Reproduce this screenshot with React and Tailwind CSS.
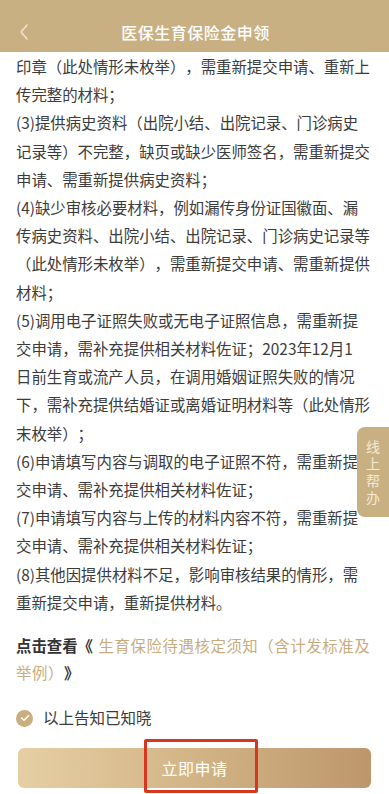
import React from 'react';

const lines = [
  '印章（此处情形未枚举），需重新提交申请、重新上',
  '传完整的材料；',
  '(3)提供病史资料（出院小结、出院记录、门诊病史',
  '记录等）不完整，缺页或缺少医师签名，需重新提交',
  '申请、需重新提供病史资料；',
  '(4)缺少审核必要材料，例如漏传身份证国徽面、漏',
  '传病史资料、出院小结、出院记录、门诊病史记录等',
  '（此处情形未枚举），需重新提交申请、需重新提供',
  '材料；',
  '(5)调用电子证照失败或无电子证照信息，需重新提',
  '交申请，需补充提供相关材料佐证；2023年12月1',
  '日前生育或流产人员，在调用婚姻证照失败的情况',
  '下，需补充提供结婚证或离婚证明材料等（此处情形',
  '末枚举）；',
  '(6)申请填写内容与调取的电子证照不符，需重新提',
  '交申请、需补充提供相关材料佐证；',
  '(7)申请填写内容与上传的材料内容不符，需重新提',
  '交申请、需补充提供相关材料佐证；',
  '(8)其他因提供材料不足，影响审核结果的情形，需',
  '重新提交申请，重新提供材料。',
];

const font = { fontFamily: '"Noto Sans CJK SC", "Noto Sans", sans-serif' };

export default function App() {
  return (
    <div className="relative w-[389px] h-[794px] bg-white overflow-hidden [text-spacing-trim:space-all]" style={font}>
      {/* top bar */}
      <header className="h-[52px] bg-[#c8b083] flex items-center px-4 relative">
        <svg width="12" height="20" viewBox="0 0 12 20" className="ml-[2px] mt-[12px]">
          <path d="M9 3 L3 10 L9 17" fill="none" stroke="#f6e8cc" strokeWidth="1.4" strokeLinecap="round" strokeLinejoin="round" />
        </svg>
        <div className="flex-1 text-center text-white text-[16px] font-medium pt-[12px] pr-[12px] tracking-[0.5px]">
          医保生育保险金申领
        </div>
      </header>

      {/* notice text */}
      <div className="px-4 text-[15.4px] leading-[28.2px] text-[#3b3b3b]">
        {lines.map((l, i) => (
          <div key={i} className="whitespace-nowrap">{l}</div>
        ))}
      </div>

      <div className="px-4 mt-[15.5px] text-[15.4px] leading-[27px]">
        <div className="whitespace-nowrap">
          <span className="font-bold text-[#333]">点击查看《 </span>
          <span className="text-[#c8ac7e] ml-[2px] tracking-[0.6px]">生育保险待遇核定须知（含计发标准及</span>
        </div>
        <div className="whitespace-nowrap">
          <span className="text-[#c8ac7e] tracking-[0.6px]">举例）</span>
          <span className="font-bold text-[#333]">》</span>
        </div>
      </div>

      <div className="px-4 mt-[20.5px] h-[24px] flex items-center gap-[10px]">
        <span className="w-[17px] h-[17px] rounded-full bg-[#c9ae80] flex items-center justify-center">
          <svg width="10" height="8" viewBox="0 0 10 8">
            <path d="M1.5 4 L4 6.3 L8.5 1.8" fill="none" stroke="white" strokeWidth="1.5" strokeLinecap="round" strokeLinejoin="round" />
          </svg>
        </span>
        <span className="text-[15.5px] text-[#3b3b3b]">以上告知已知晓</span>
      </div>

      <div className="relative mx-[18px] mt-[18px]">
        <button className="w-full h-[40px] rounded-[6px] bg-gradient-to-r from-[#e6cfa4] via-[#d2b486] to-[#bd976c] text-white text-[16px] tracking-[0.5px]">
          立即申请
        </button>
        <div className="absolute left-[126px] top-[-9px] w-[114px] h-[54px] border-[3px] border-[#d8361f] rounded-[2px]" />
      </div>

      {/* floating help tab */}
      <div className="absolute right-0 top-[427px] w-[32px] h-[90px] bg-[#c8b083] rounded-l-[8px] flex flex-col items-center justify-center text-[#f5e9d3] text-[14px] leading-[17px]">
        <span>线</span>
        <span>上</span>
        <span>帮</span>
        <span>办</span>
      </div>
    </div>
  );
}
